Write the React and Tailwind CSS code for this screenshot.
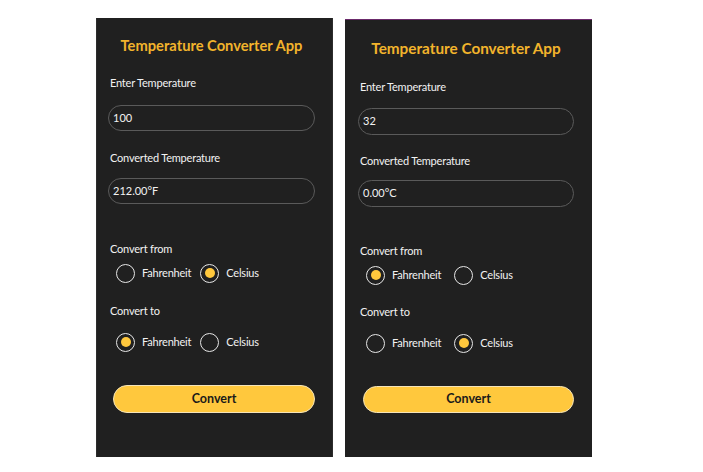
import React from "react";

function Radio({ checked, label }) {
  return (
    <div className="flex items-center">
      <span className="w-[19px] h-[19px] rounded-full border-[1.5px] border-[#e6e6e6] flex items-center justify-center shrink-0">
        {checked && <span className="w-[10px] h-[10px] rounded-full bg-[#ffc83d]" />}
      </span>
      <span className="ml-[7px] text-[11px] leading-[16px] tracking-[-0.2px] text-[#f2f2f2]">{label}</span>
    </div>
  );
}

function Panel({ value, result, from, to, right }) {
  const label = "ml-[2px] text-[11px] leading-[16px] tracking-[-0.2px] text-[#f2f2f2] ";
  return (
    <div
      className={
        right
          ? "w-[247px] h-[438px] mt-[1px] bg-[#202020] border-t border-[#6b2a6b] pl-[13px] pr-[18px] pt-[18px] flex flex-col"
          : "w-[237px] h-[439px] bg-[#202020] border-x border-[#2c2c2c] pl-[11px] pr-[17px] pt-[17px] flex flex-col"
      }
    >
      <div className={"text-center font-bold text-[#f2b42c] leading-[20px] " + (right ? "text-[15.3px]" : "text-[14.7px]")}>
        Temperature Converter App
      </div>
      <div className={label + (right ? "mt-[21px]" : "mt-[20px]")}>
        Enter Temperature
      </div>
      <div className={"rounded-full border border-[#5a5a5a] flex items-center pl-[4px] text-[11px] text-[#f2f2f2] " + (right ? "mt-[13px] h-[27px]" : "mt-[14px] h-[26px]")}>
        {value}
      </div>
      <div className={label + (right ? "mt-[18px]" : "mt-[19px]")}>
        Converted Temperature
      </div>
      <div className={"rounded-full border border-[#5a5a5a] flex items-center pl-[4px] text-[11px] text-[#f2f2f2] " + (right ? "mt-[11px] h-[27px]" : "mt-[12px] h-[26px]")}>
        {result}
      </div>
      <div className={label + (right ? "mt-[36px]" : "mt-[37px]")}>
        Convert from
      </div>
      <div className="mt-[6px] ml-[8px] h-[20px] flex items-center">
        <Radio checked={from === "F"} label="Fahrenheit" />
        <div className={right ? "ml-[13px]" : "ml-[9px]"}>
          <Radio checked={from === "C"} label="Celsius" />
        </div>
      </div>
      <div className={label + (right ? "mt-[19px]" : "mt-[20px]")}>
        Convert to
      </div>
      <div className="mt-[13px] ml-[8px] h-[20px] flex items-center">
        <Radio checked={to === "F"} label="Fahrenheit" />
        <div className={right ? "ml-[13px]" : "ml-[9px]"}>
          <Radio checked={to === "C"} label="Celsius" />
        </div>
      </div>
      <button className={"ml-[5px] rounded-full bg-[#ffc83d] border-[1.5px] border-[#f5e4b8] text-[#1a1a1a] font-bold text-[12.5px] flex items-center justify-center " + (right ? "mt-[33px] h-[27px]" : "mt-[33px] h-[28px]")}>
        Convert
      </button>
    </div>
  );
}

export default function App() {
  return (
    <div className="w-[703px] h-[472px] bg-white flex items-start pl-[96px] pt-[18px] gap-[12px]" style={{ fontFamily: 'Lato, "Noto Sans", sans-serif' }}>
      <Panel value="100" result="212.00°F" from="C" to="F" />
      <Panel value="32" result="0.00°C" from="F" to="C" right />
    </div>
  );
}
